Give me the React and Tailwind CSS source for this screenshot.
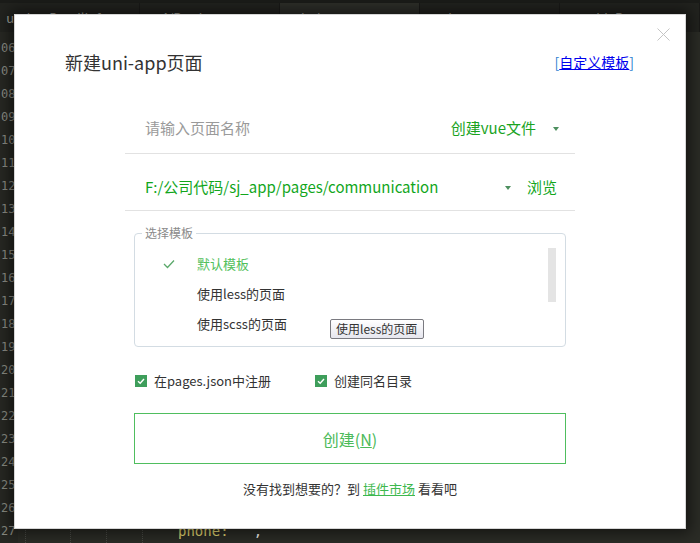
import React from 'react';

const tabs = ['updateDetailInfo.vue', '4/Product.vue', 'index.vue', 'about.vue', 'guidePage.vue'];
const lines = Array.from({ length: 22 }, (_, i) => 106 + i);

const Caret = () => (
  <span className="inline-block h-0 w-0 border-l-[3px] border-r-[3px] border-t-[4px] border-l-transparent border-r-transparent border-t-[#4d8f5f]" />
);

const Editor = () => (
  <div className="flex h-full flex-col">
    <div className="h-[3px] bg-[#1b1c19]" />
    <div className="flex h-[29px] bg-[#22231f] text-[13px] text-[#a4a59c]">
      {tabs.map((t, i) => (
        <div
          key={t}
          className={`flex w-[140px] shrink-0 items-center overflow-hidden whitespace-nowrap border-r border-[#1a1a18] ${
            i === 0 ? 'justify-end pr-[6px]' : 'pl-[21px]'
          } ${i === 2 ? 'bg-[#2e2f2a]' : ''}`}
        >
          {t}
        </div>
      ))}
    </div>
    <div className="flex flex-1 bg-[#2b2c26]">
      <div className="w-[18px] shrink-0 bg-[#272823] pt-[5px] font-['DejaVu_Sans_Mono',monospace] text-[12px] leading-[23px] text-[#8c8d85]">
        {lines.map((n) => (
          <div key={n} className="whitespace-nowrap pl-[1px]">
            {String(n).slice(1)}
          </div>
        ))}
      </div>
      <div className="flex-1 pt-[5px] font-['DejaVu_Sans_Mono',monospace] text-[14px] leading-[23px]">
        {lines.map((n) =>
          n === 127 ? (
            <div key={n} className="flex h-[23px] whitespace-pre">
              <span className="w-[7px]" />
              <span className="w-[45px] border-l border-dotted border-[#4a4b45]" />
              <span className="w-[36px] border-l border-dotted border-[#4a4b45]" />
              <span className="w-[36px] border-l border-dotted border-[#4a4b45]" />
              <span className="w-[36px] border-l border-dotted border-[#4a4b45]" />
              <span className="text-[#e6db74]">phone:</span>
              <span className="text-[#f8f8f2]">   ,</span>
            </div>
          ) : (
            <div key={n} className="h-[23px]" />
          )
        )}
      </div>
    </div>
  </div>
);

const Check = () => (
  <svg width="12" height="12" viewBox="0 0 12 12">
    <rect width="12" height="12" fill="#3e9e5b" />
    <polyline points="3,6.2 5.2,8.3 9,4" fill="none" stroke="#fff" strokeWidth="1.4" />
  </svg>
);

const Dialog = () => (
  <div className="absolute left-[14px] top-[14px] flex h-[515px] w-[672px] flex-col border border-[#d6d6d6] bg-white shadow-[0_0_14px_4px_rgba(0,0,0,0.55)]">
    <button type="button" className="absolute right-[15px] top-[13px]">
      <svg width="13" height="13" viewBox="0 0 13 13">
        <path d="M0.5 0.5 L12.5 12.5 M12.5 0.5 L0.5 12.5" stroke="#c4c4c4" strokeWidth="1" />
      </svg>
    </button>

    <div className="flex items-center justify-between pl-[50px] pr-[51px] pt-[35px]">
      <h1 className="text-[18px] leading-[24px] text-[#333]">新建uni-app页面</h1>
      <span className="text-[14px] leading-[20px]">
        <span className="text-[#2f7fd0]">[</span>
        <a className="text-[#0000ee] underline">自定义模板</a>
        <span className="text-[#2f7fd0]">]</span>
      </span>
    </div>

    <div className="mx-auto mt-[30px] w-[450px]">
      <div className="flex h-[50px] items-center justify-between border-b border-[#e2e2e2] pl-[20px] pr-[16px] text-[15px]">
        <span className="text-[#9a9a9a]">请输入页面名称</span>
        <div className="flex items-center gap-[17px] text-[#1aa31f]">
          <span>创建vue文件</span>
          <Caret />
        </div>
      </div>

      <div className="flex h-[57px] items-center border-b border-[#e2e2e2] pl-[20px] pr-[18px] pt-[11px] text-[15px] text-[#12a61c]">
        <span className="flex-1">F:/公司代码/sj_app/pages/communication</span>
        <Caret />
        <span className="ml-[16px]">浏览</span>
      </div>

      <fieldset className="mx-auto mt-[14px] h-[122px] w-[432px] rounded-[4px] border border-[#d3dce3]">
        <legend className="ml-[7px] px-[3px] text-[12px] leading-[16px] text-[#8a8a8a]">选择模板</legend>
        <div className="flex pt-[8px]">
          <div className="flex-1 text-[13px] leading-[30px]">
            <div className="flex items-center text-[#52c05c]">
              <svg className="ml-[28px] mr-[22px]" width="12" height="10" viewBox="0 0 12 10">
                <polyline points="1,5 4.5,8.5 11,1.5" fill="none" stroke="#5aa86a" strokeWidth="1.3" />
              </svg>
              默认模板
            </div>
            <div className="pl-[62px] text-[#333]">使用less的页面</div>
            <div className="pl-[62px] text-[#333]">使用scss的页面</div>
          </div>
          <div className="mr-[9px] mt-[-1px] h-[54px] w-[8px] bg-[#e4e4e4]" />
        </div>
      </fieldset>

      <div className="mt-[24px] flex h-[20px] items-center pl-[10px] text-[13px] text-[#333]">
        <label className="flex w-[180px] items-center gap-[7px]">
          <Check />
          在pages.json中注册
        </label>
        <label className="flex items-center gap-[7px]">
          <Check />
          创建同名目录
        </label>
      </div>

      <button
        type="button"
        className="mx-auto mt-[22px] flex h-[51px] w-[432px] items-center justify-center border border-[#4fbe5e] text-[16px] text-[#4cba5a]"
      >
        创建(<span className="underline">N</span>)
      </button>

      <p className="mt-[15px] text-center text-[13px] leading-[20px] text-[#333]">
        没有找到想要的？到 <a className="text-[#3db84e] underline">插件市场</a> 看看吧
      </p>
    </div>

    <div className="absolute left-[315px] top-[304px] flex h-[20px] w-[94px] items-center rounded-[2px] border border-[#7a7a80] bg-gradient-to-b from-white to-[#e6e6ee] pl-[5px] text-[12px] text-[#333]">
      使用less的页面
    </div>
  </div>
);

export default function App() {
  return (
    <div className="relative h-[543px] w-[700px] overflow-hidden bg-[#2b2c26] font-['Noto_Sans_CJK_SC','Noto_Sans',sans-serif]">
      <Editor />
      <Dialog />
    </div>
  );
}
